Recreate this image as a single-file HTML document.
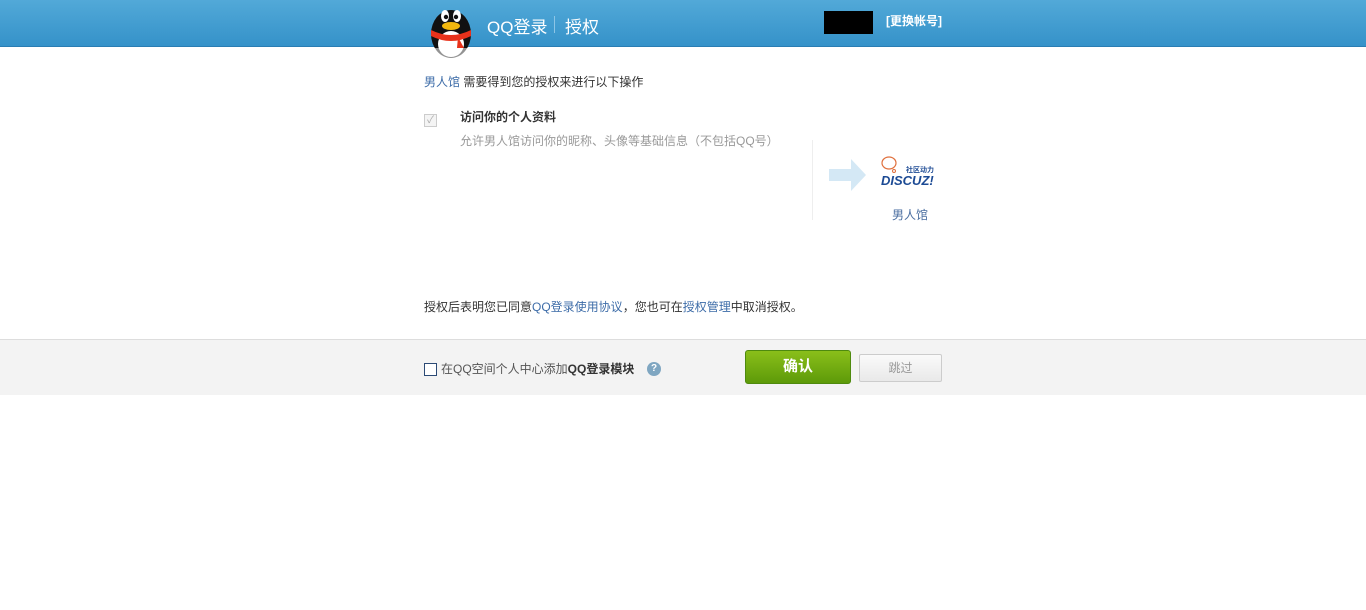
<!DOCTYPE html>
<html><head><meta charset="utf-8"><style>
*{margin:0;padding:0;box-sizing:border-box}
body{width:1366px;height:610px;background:#fff;font-family:"Liberation Sans","Noto Sans CJK SC",sans-serif;font-size:12px;color:#333;position:relative;overflow:hidden}
.hd{position:absolute;left:0;top:0;width:1366px;height:47px;background:linear-gradient(#52a9d8,#3592c9);border-bottom:1px solid #2a7db3}
.abs{position:absolute;white-space:nowrap}
a{color:#3d6ca8;text-decoration:none}
.foot{position:absolute;left:0;top:339px;width:1366px;height:56px;background:#f3f3f3;border-top:1px solid #ddd}
</style></head><body>
<div class="hd"></div>
<svg class="abs" style="left:424px;top:4px" width="54" height="54" viewBox="0 0 54 54">
<ellipse cx="27" cy="30" rx="20" ry="24" fill="#111"/>
<ellipse cx="27" cy="40" rx="13" ry="13" fill="#fff"/>
<ellipse cx="21" cy="12" rx="4" ry="6" fill="#fff"/><ellipse cx="33" cy="12" rx="4" ry="6" fill="#fff"/>
<circle cx="22" cy="13" r="2.2" fill="#111"/><circle cx="32" cy="13" r="2.2" fill="#111"/>
<ellipse cx="27" cy="22" rx="9" ry="4" fill="#f2b70e"/>
<path d="M7 26 Q27 36 47 26 L47 32 Q27 42 7 32Z" fill="#e8321b"/>
<path d="M34 33 L40 44 L33 44Z" fill="#e8321b"/>
<rect x="0" y="44" width="54" height="10" fill="#fff" opacity=".55"/>
</svg>
<div class="abs" style="left:487px;top:13px;font-size:17px;color:#fff">QQ登录</div>
<div class="abs" style="left:554px;top:16px;width:1px;height:17px;background:#8cc5e6"></div>
<div class="abs" style="left:565px;top:13px;font-size:17px;color:#fff">授权</div>
<div class="abs" style="left:824px;top:11px;width:49px;height:23px;background:#000"></div>
<div class="abs" style="left:886px;top:12px;color:#fff;font-weight:bold">[更换帐号]</div>
<div class="abs" style="left:424px;top:73px"><a>男人馆</a> 需要得到您的授权来进行以下操作</div>
<div class="abs" style="left:424px;top:114px;width:13px;height:13px;border:1px solid #ccc;background:#f4f4f4;color:#aaa;font-size:10px;text-align:center;line-height:11px">✓</div>
<div class="abs" style="left:460px;top:108px;font-weight:bold;font-size:12px">访问你的个人资料</div>
<div class="abs" style="left:460px;top:132px;color:#999">允许男人馆访问你的昵称、头像等基础信息（不包括QQ号）</div>
<div class="abs" style="left:812px;top:140px;width:1px;height:80px;background:#eee"></div>
<svg class="abs" style="left:829px;top:159px" width="38" height="32"><path d="M0 10H22V0L37 16 22 32V22H0Z" fill="#d4e8f5"/></svg>
<svg class="abs" style="left:880px;top:155px" width="62" height="32"><ellipse cx="9" cy="8" rx="7" ry="6" fill="none" stroke="#e0703d" stroke-width="1.2"/><circle cx="14" cy="16" r="1.5" fill="none" stroke="#e0703d"/>
<text x="26" y="17" font-size="7" fill="#1c4a94" font-weight="bold" font-family="Noto Sans CJK SC">社区动力</text>
<text x="1" y="30" font-size="13" fill="#1c4a94" font-weight="bold" font-style="italic" font-family="Liberation Sans">DISCUZ!</text></svg>
<div class="abs" style="left:892px;top:206px;color:#4a6ea0">男人馆</div>
<div class="abs" style="left:424px;top:298px">授权后表明您已同意<a>QQ登录使用协议</a>，您也可在<a>授权管理</a>中取消授权。</div>
<div class="foot"></div>
<div class="abs" style="left:424px;top:363px;width:13px;height:13px;border:1px solid #2b4a75;background:#fff"></div>
<div class="abs" style="left:441px;top:360px;color:#555">在QQ空间个人中心添加<b style="color:#333">QQ登录模块</b></div>
<div class="abs" style="left:647px;top:362px;width:14px;height:14px;border-radius:50%;background:#7fa6c1;color:#fff;font-size:10px;font-weight:bold;text-align:center;line-height:14px">?</div>
<div class="abs" style="left:745px;top:350px;width:106px;height:34px;border:1px solid #4e8a0e;border-radius:3px;background:linear-gradient(#8abf1a,#5d9a09);color:#fff;font-weight:bold;font-size:15px;text-align:center;line-height:32px">确认</div>
<div class="abs" style="left:859px;top:354px;width:83px;height:28px;border:1px solid #ccc;border-radius:2px;background:linear-gradient(#fafafa,#e9e9e9);color:#999;text-align:center;line-height:26px">跳过</div>
</body></html>
